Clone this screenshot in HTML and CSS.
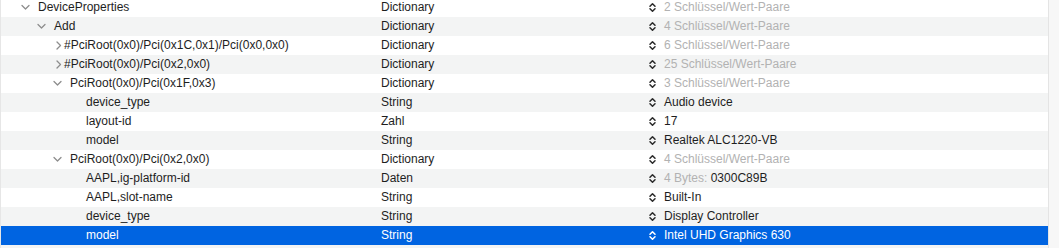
FILE: index.html
```html
<!DOCTYPE html>
<html>
<head>
<meta charset="utf-8">
<link rel="stylesheet" href="styles.css">
</head>
<body>
<div class="table">
  <div class="row">
    <div class="key lvl0"><svg class="chev" width="9" height="9" viewBox="0 0 9 9"><path d="M1 2.5 L4.5 6 L8 2.5"/></svg><span>DeviceProperties</span></div>
    <div class="type">Dictionary</div>
    <div class="value"><svg class="ud" width="7" height="11" viewBox="0 0 7 11"><path d="M1 4.2 L3.5 1.7 L6 4.2 M1 6.8 L3.5 9.3 L6 6.8"/></svg><span class="dim">2 Schlüssel/Wert-Paare</span></div>
  </div>
  <div class="row">
    <div class="key lvl1"><svg class="chev" width="9" height="9" viewBox="0 0 9 9"><path d="M1 2.5 L4.5 6 L8 2.5"/></svg><span>Add</span></div>
    <div class="type">Dictionary</div>
    <div class="value"><svg class="ud" width="7" height="11" viewBox="0 0 7 11"><path d="M1 4.2 L3.5 1.7 L6 4.2 M1 6.8 L3.5 9.3 L6 6.8"/></svg><span class="dim">4 Schlüssel/Wert-Paare</span></div>
  </div>
  <div class="row">
    <div class="key lvl2 hash"><svg class="chev" width="9" height="9" viewBox="0 0 9 9"><path d="M4 1 L7.5 4.5 L4 8"/></svg><span>#PciRoot(0x0)/Pci(0x1C,0x1)/Pci(0x0,0x0)</span></div>
    <div class="type">Dictionary</div>
    <div class="value"><svg class="ud" width="7" height="11" viewBox="0 0 7 11"><path d="M1 4.2 L3.5 1.7 L6 4.2 M1 6.8 L3.5 9.3 L6 6.8"/></svg><span class="dim">6 Schlüssel/Wert-Paare</span></div>
  </div>
  <div class="row">
    <div class="key lvl2 hash"><svg class="chev" width="9" height="9" viewBox="0 0 9 9"><path d="M4 1 L7.5 4.5 L4 8"/></svg><span>#PciRoot(0x0)/Pci(0x2,0x0)</span></div>
    <div class="type">Dictionary</div>
    <div class="value"><svg class="ud" width="7" height="11" viewBox="0 0 7 11"><path d="M1 4.2 L3.5 1.7 L6 4.2 M1 6.8 L3.5 9.3 L6 6.8"/></svg><span class="dim">25 Schlüssel/Wert-Paare</span></div>
  </div>
  <div class="row">
    <div class="key lvl2"><svg class="chev" width="9" height="9" viewBox="0 0 9 9"><path d="M1 2.5 L4.5 6 L8 2.5"/></svg><span>PciRoot(0x0)/Pci(0x1F,0x3)</span></div>
    <div class="type">Dictionary</div>
    <div class="value"><svg class="ud" width="7" height="11" viewBox="0 0 7 11"><path d="M1 4.2 L3.5 1.7 L6 4.2 M1 6.8 L3.5 9.3 L6 6.8"/></svg><span class="dim">3 Schlüssel/Wert-Paare</span></div>
  </div>
  <div class="row">
    <div class="key lvl3"><span>device_type</span></div>
    <div class="type">String</div>
    <div class="value"><svg class="ud" width="7" height="11" viewBox="0 0 7 11"><path d="M1 4.2 L3.5 1.7 L6 4.2 M1 6.8 L3.5 9.3 L6 6.8"/></svg><span>Audio device</span></div>
  </div>
  <div class="row">
    <div class="key lvl3"><span>layout-id</span></div>
    <div class="type">Zahl</div>
    <div class="value"><svg class="ud" width="7" height="11" viewBox="0 0 7 11"><path d="M1 4.2 L3.5 1.7 L6 4.2 M1 6.8 L3.5 9.3 L6 6.8"/></svg><span>17</span></div>
  </div>
  <div class="row">
    <div class="key lvl3"><span>model</span></div>
    <div class="type">String</div>
    <div class="value"><svg class="ud" width="7" height="11" viewBox="0 0 7 11"><path d="M1 4.2 L3.5 1.7 L6 4.2 M1 6.8 L3.5 9.3 L6 6.8"/></svg><span>Realtek ALC1220-VB</span></div>
  </div>
  <div class="row">
    <div class="key lvl2"><svg class="chev" width="9" height="9" viewBox="0 0 9 9"><path d="M1 2.5 L4.5 6 L8 2.5"/></svg><span>PciRoot(0x0)/Pci(0x2,0x0)</span></div>
    <div class="type">Dictionary</div>
    <div class="value"><svg class="ud" width="7" height="11" viewBox="0 0 7 11"><path d="M1 4.2 L3.5 1.7 L6 4.2 M1 6.8 L3.5 9.3 L6 6.8"/></svg><span class="dim">4 Schlüssel/Wert-Paare</span></div>
  </div>
  <div class="row">
    <div class="key lvl3"><span>AAPL,ig-platform-id</span></div>
    <div class="type">Daten</div>
    <div class="value"><svg class="ud" width="7" height="11" viewBox="0 0 7 11"><path d="M1 4.2 L3.5 1.7 L6 4.2 M1 6.8 L3.5 9.3 L6 6.8"/></svg><span><span class="dim">4 Bytes:</span> 0300C89B</span></div>
  </div>
  <div class="row">
    <div class="key lvl3"><span>AAPL,slot-name</span></div>
    <div class="type">String</div>
    <div class="value"><svg class="ud" width="7" height="11" viewBox="0 0 7 11"><path d="M1 4.2 L3.5 1.7 L6 4.2 M1 6.8 L3.5 9.3 L6 6.8"/></svg><span>Built-In</span></div>
  </div>
  <div class="row">
    <div class="key lvl3"><span>device_type</span></div>
    <div class="type">String</div>
    <div class="value"><svg class="ud" width="7" height="11" viewBox="0 0 7 11"><path d="M1 4.2 L3.5 1.7 L6 4.2 M1 6.8 L3.5 9.3 L6 6.8"/></svg><span>Display Controller</span></div>
  </div>
  <div class="row selected">
    <div class="key lvl3"><span>model</span></div>
    <div class="type">String</div>
    <div class="value"><svg class="ud" width="7" height="11" viewBox="0 0 7 11"><path d="M1 4.2 L3.5 1.7 L6 4.2 M1 6.8 L3.5 9.3 L6 6.8"/></svg><span>Intel UHD Graphics 630</span></div>
  </div>
  <div class="row filler"></div>
</div>
</body>
</html>
```

FILE: styles.css
```css
html, body {
  margin: 0;
  padding: 0;
  height: 248px;
  overflow: hidden;
  background: #f7f7f7;
}

body {
  font-family: "Liberation Sans", Arial, sans-serif;
  font-size: 12px;
  color: #1e1e1e;
}

.table {
  width: 1047px;
  margin-top: -2px;
  background: #ffffff;
  border-left: 1px solid #e6e6e6;
  border-right: 1px solid #e4e4e4;
}

.row {
  display: grid;
  grid-template-columns: 380px 268px 1fr;
  height: 19px;
  line-height: 19px;
  white-space: nowrap;
}

.row.filler {
  height: 3px;
}

.row:nth-child(even) {
  background: #f3f4f4;
}

.key {
  display: flex;
  align-items: center;
}

.lvl0 { padding-left: 37px; }
.lvl1 { padding-left: 53px; }
.lvl2 { padding-left: 69px; }
.lvl3 { padding-left: 85px; }

.hash span {
  margin-left: -6px;
}

.chev {
  margin-left: -17px;
  margin-right: 8px;
  flex: none;
}

.chev path {
  fill: none;
  stroke: #8d8d8d;
  stroke-width: 1.3;
  stroke-linecap: round;
  stroke-linejoin: round;
}

.type {
  display: flex;
  align-items: center;
}

.value {
  display: flex;
  align-items: center;
}

.ud {
  flex: none;
  margin-right: 8px;
}

.ud path {
  fill: none;
  stroke: #2b2b2b;
  stroke-width: 1.5;
  stroke-linecap: round;
  stroke-linejoin: round;
}

.dim {
  color: #b2b2b2;
}

.row.selected {
  background: #0064e1;
  color: #ffffff;
}

.row.selected .ud path {
  stroke: #ffffff;
}
```
